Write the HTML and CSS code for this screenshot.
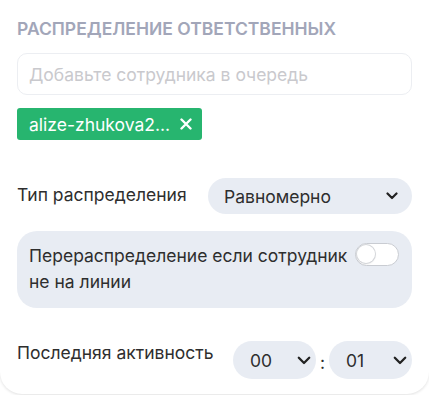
FILE: index.html
```html
<!DOCTYPE html>
<html lang="ru">
<head>
<meta charset="utf-8">
<link rel="stylesheet" href="styles.css">
</head>
<body>
<div class="card">
  <h2 class="title">Распределение ответственных</h2>
  <div class="input">Добавьте сотрудника в очередь</div>
  <div class="tags">
    <span class="tag">alize-zhukova2...
      <svg class="tag-x" width="12" height="12" viewBox="0 0 12 12"><path d="M1.5 1.5 L10.5 10.5 M10.5 1.5 L1.5 10.5" stroke="#fff" stroke-width="2.4" stroke-linecap="round"/></svg>
    </span>
  </div>
  <div class="row row-type">
    <span class="label">Тип распределения</span>
    <div class="select select-wide">
      <span>Равномерно</span>
      <svg class="chev" width="12" height="8" viewBox="0 0 12 8"><path d="M1.5 1.5 L6 6 L10.5 1.5" fill="none" stroke="#222" stroke-width="2.2" stroke-linecap="round" stroke-linejoin="round"/></svg>
    </div>
  </div>
  <div class="box">
    <span class="box-text">Перераспределение если сотрудник не на линии</span>
    <span class="toggle"><span class="knob"></span></span>
  </div>
  <div class="row row-time">
    <span class="label">Последняя активность</span>
    <div class="time">
      <div class="select select-small">
        <span>00</span>
        <svg class="chev chev-lg" width="14" height="9" viewBox="0 0 14 9"><path d="M1.8 1.8 L7 7 L12.2 1.8" fill="none" stroke="#222" stroke-width="2.3" stroke-linecap="round" stroke-linejoin="round"/></svg>
      </div>
      <span class="colon">:</span>
      <div class="select select-small">
        <span>01</span>
        <svg class="chev chev-lg" width="14" height="9" viewBox="0 0 14 9"><path d="M1.8 1.8 L7 7 L12.2 1.8" fill="none" stroke="#222" stroke-width="2.3" stroke-linecap="round" stroke-linejoin="round"/></svg>
      </div>
    </div>
  </div>
</div>
</body>
</html>
```
FILE: styles.css
```css
* { box-sizing: border-box; }
html, body { margin: 0; padding: 0; background: #fff; }
body {
  font-family: Inter, "Noto Sans", sans-serif;
  color: #2b2b2b;
  width: 429px;
  height: 395px;
  overflow: hidden;
}
.card {
  width: 429px;
  height: 394px;
  background: #fff;
  border-radius: 0 0 22px 22px;
  box-shadow: 0 1px 3px rgba(0,0,0,0.12);
  padding: 18px 17px 0 17px;
}
.title {
  margin: 0;
  font-size: 17.5px;
  font-weight: 600;
  text-transform: uppercase;
  color: #a2a6b9;
  line-height: 22px;
}
.input {
  margin-top: 13px;
  height: 42px;
  border: 1px solid #eceef2;
  border-radius: 10px;
  padding: 0 11px;
  display: flex;
  align-items: center;
  font-size: 17.5px;
  color: #c9c9cd;
}
.tags { margin-top: 13px; display: flex; }
.tag {
  background: #27b56f;
  color: #fff;
  height: 32px;
  border-radius: 3px;
  padding: 0 10px 0 12px;
  display: inline-flex;
  align-items: center;
  gap: 10px;
  font-size: 17.5px;
}
.row {
  display: flex;
  align-items: center;
  justify-content: space-between;
}
.row-type { margin-top: 38px; }
.label { font-size: 17.5px; line-height: 22px; color: #2e2e2e; }
.row-type .label { margin-top: -3px; }
.select {
  background: #e8ecf3;
  border-radius: 18px;
  height: 36px;
  display: flex;
  align-items: center;
  justify-content: space-between;
  font-size: 17.5px;
  color: #2e2e2e;
}
.select-wide { width: 204px; padding: 0 14px 0 16px; }
.box {
  margin-top: 17px;
  background: #e8ecf3;
  border-radius: 20px;
  height: 77px;
  padding: 12px 13px 0 12px;
  display: flex;
  align-items: flex-start;
  justify-content: space-between;
  gap: 6px;
}
.box-text { font-size: 17.5px; line-height: 26px; color: #2e2e2e; }
.toggle {
  flex: none;
  width: 44px;
  height: 23px;
  border: 1.5px solid #c9ccd2;
  border-radius: 12px;
  background: #fff;
  margin-top: 0;
  position: relative;
}
.knob {
  position: absolute;
  left: 1px;
  top: 1px;
  width: 18px;
  height: 18px;
  border-radius: 50%;
  background: #fff;
  box-shadow: 0 0 0 1px #d4d6da, 0 1px 2px rgba(0,0,0,0.15);
}
.row-time { margin-top: 33px; }
.row-time .label { margin-top: -14px; }
.time { display: flex; align-items: center; gap: 4px; }
.select-small { width: 83px; height: 38px; padding: 0 5px 0 17px; border-radius: 19px; }
.colon { font-size: 17.5px; color: #2e2e2e; width: 5px; text-align: center; margin-top: 4px; }
.chev { flex: none; }
.chev-lg { margin-top: 1px; }
```
